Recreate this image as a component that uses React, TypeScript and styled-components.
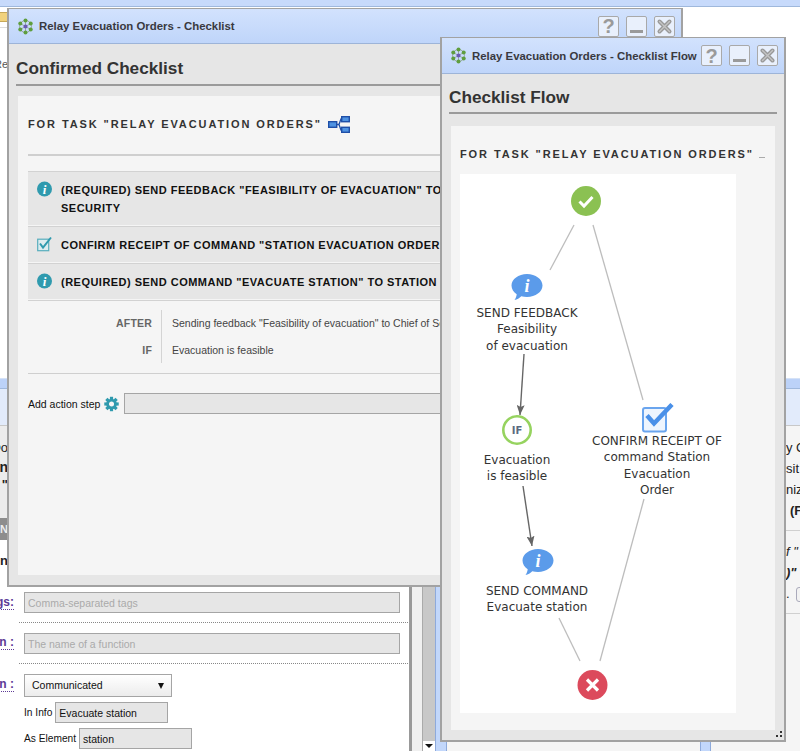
import React from 'react'
import styled, { createGlobalStyle } from 'styled-components'

const GlobalStyle = createGlobalStyle`
  html, body {
    margin: 0;
    padding: 0;
    background: #fff;
    overflow: hidden;
  }
  * {
    box-sizing: border-box;
  }
`

const Desktop = styled.div`
  position: relative;
  width: 800px;
  height: 751px;
  overflow: hidden;
  background: #fff;
  font-family: 'Liberation Sans', Arial, sans-serif;
`

const TopStrip = styled.div`
  height: 7px;
  background: #c7dafb;
  border-bottom: 1px solid #9fb8dc;
`

/* ---------- windows in the back ---------- */

const BackPane = styled.div<{ $left: number; $top: number; $width: number; $height: number }>`
  position: absolute;
  left: ${(p) => p.$left}px;
  top: ${(p) => p.$top}px;
  width: ${(p) => p.$width}px;
  height: ${(p) => p.$height}px;
  overflow: hidden;
`

const BackTitle = styled.div`
  height: 11px;
  background: #bcd2f8;
  border-top: 1px solid #d5e2f7;
  border-bottom: 1px solid #9fb8dc;
`

const BackSubtitle = styled.div`
  height: 37px;
  background: #e2ebfb;
  border-bottom: 1px solid #c8c8c8;
`

const ClipText = styled.div<{ $bold?: boolean; $italic?: boolean; $h?: number; $indent?: number; $size?: number }>`
  height: ${(p) => p.$h ?? 21}px;
  padding-left: ${(p) => p.$indent ?? 0}px;
  line-height: ${(p) => p.$h ?? 21}px;
  font-size: ${(p) => p.$size ?? 13}px;
  font-weight: ${(p) => (p.$bold ? 700 : 400)};
  font-style: ${(p) => (p.$italic ? 'italic' : 'normal')};
  color: #222;
  white-space: nowrap;
`

const EndText = styled(ClipText)`
  display: flex;
  justify-content: flex-end;
`

const TopLeftHeader = styled.div`
  height: 21px;
  padding-top: 5px;
  border-bottom: 1px solid #ddd;
`

const TopLeftIcon = styled.div`
  width: 8px;
  height: 10px;
  background: #f1d27c;
  border: 1px solid #c7a858;
  border-left: none;
`

const TopLeftText = styled(EndText)`
  margin-top: 26px;
  color: #555;
`

const LeftBody = styled.div`
  height: 114px;
  padding-top: 11px;
  background: #ececec;
`

const GrayTab = styled.div`
  height: 22px;
  line-height: 22px;
  margin-top: 25px;
  background: #8d8d8d;
  color: #eee;
  font-size: 11px;
  font-weight: 700;
  text-align: right;
`

const FormPane = styled.div`
  display: flex;
  height: 100%;
  background: #fff;
`

const FormBody = styled.div`
  width: 409px;
  padding-top: 4px;
  background: #fff;
`

const FormRow = styled.div<{ $h: number; $pad: number }>`
  position: relative;
  width: 389px;
  height: ${(p) => p.$h}px;
  margin-left: 19px;
  padding-top: ${(p) => p.$pad}px;
  border-bottom: 1px dotted #888;
`

const SelectRow = styled.div`
  position: relative;
  margin-left: 19px;
  padding-top: 10px;
`

const FieldLabel = styled.span<{ $top: number }>`
  position: absolute;
  right: 100%;
  top: ${(p) => p.$top}px;
  margin-right: 5px;
  font-size: 12px;
  font-weight: 700;
  color: #5d3a96;
  border-bottom: 1px dotted #5d3a96;
  white-space: nowrap;
`

const FieldInput = styled.input<{ $width?: number }>`
  display: block;
  width: ${(p) => p.$width ?? 376}px;
  height: 21px;
  margin: 0 0 0 5px;
  padding: 0 3px;
  background: #e6e6e6;
  border: 1px solid #a5a5a5;
  font-family: inherit;
  font-size: 10.5px;
  color: #111;
  &::placeholder {
    color: #aaa;
    opacity: 1;
  }
`

const FakeSelect = styled.div`
  position: relative;
  width: 148px;
  height: 23px;
  margin-left: 5px;
  padding-left: 7px;
  line-height: 21px;
  font-size: 10.5px;
  color: #111;
  border: 1px solid #a5a5a5;
  background: linear-gradient(#fff, #ececec);
`

const SelectArrow = styled.span`
  position: absolute;
  right: 7px;
  top: 8px;
  width: 0;
  height: 0;
  border-left: 3px solid transparent;
  border-right: 3px solid transparent;
  border-top: 6px solid #111;
`

const InlineField = styled.div`
  display: flex;
  align-items: center;
  gap: 3px;
  height: 21px;
  margin: 5px 0 0 24px;
  font-size: 10.2px;
  color: #111;
  & > input {
    margin-left: 0;
  }
`

const ScrollGap = styled.div`
  width: 3px;
  background: #999;
`

const ScrollGutter = styled.div`
  width: 10px;
  background: #f0f0f0;
`

const ScrollTrack = styled.div`
  position: relative;
  width: 13px;
  background: #c8c8c8;
  border-left: 1px solid #aaa;
`

const ScrollButton = styled.div`
  position: absolute;
  left: 0;
  right: 0;
  bottom: 0;
  height: 10px;
  background: #fff;
  &::after {
    content: '';
    position: absolute;
    left: 2px;
    top: 3px;
    border-left: 4px solid transparent;
    border-right: 4px solid transparent;
    border-top: 4px solid #111;
  }
`

const BlueEdge = styled.div`
  flex: 1;
  background: #c2d7fb;
  border-left: 1px solid #8eaadb;
`

const BottomStrip = styled.div`
  display: flex;
  height: 100%;
`

const StripBlue = styled.div<{ $width: number }>`
  width: ${(p) => p.$width}px;
  background: #c2d7fb;
  border-left: 1px solid #8eaadb;
  border-right: 1px solid #8eaadb;
`

const StripGrey = styled.div<{ $width?: number }>`
  width: ${(p) => (p.$width ? `${p.$width}px` : 'auto')};
  flex: ${(p) => (p.$width ? 'none' : 1)};
  background: #f5f5f5;
`

const RightBody = styled.div`
  height: 100%;
  padding-top: 11px;
  background: #f5f5f5;
`

const RightLine = styled.div`
  height: 1px;
  margin: 9px 0 10px;
  background: #d0d0d0;
`

const TinyButton = styled.span`
  display: inline-block;
  width: 12px;
  height: 15px;
  margin-left: 6px;
  border: 1px solid #aab;
  border-radius: 3px;
  background: #f2f2f2;
  vertical-align: middle;
`

/* ---------- floating windows ---------- */

const Win = styled.div<{ $left: number; $top: number; $width: number; $height: number }>`
  position: absolute;
  left: ${(p) => p.$left}px;
  top: ${(p) => p.$top}px;
  width: ${(p) => p.$width}px;
  height: ${(p) => p.$height}px;
  display: flex;
  flex-direction: column;
  background: #e6e6e6;
  border: 2px solid #a2a2a2;
  border-top-width: 1px;
  overflow: hidden;
`

const TitleBar = styled.div<{ $h: number }>`
  flex: none;
  display: flex;
  align-items: center;
  height: ${(p) => p.$h}px;
  padding-left: 8px;
  background: linear-gradient(#d2e2fd, #bfd5fa);
  border-bottom: 1px solid #9db4d8;
`

const TitleText = styled.span`
  margin-left: 5px;
  font-size: 11.4px;
  font-weight: 700;
  color: #39393f;
  white-space: nowrap;
`

const TitleButtons = styled.div`
  display: flex;
  gap: 7px;
  margin-left: auto;
  padding-right: 6px;
`

const TitleButton = styled.div`
  display: flex;
  align-items: center;
  justify-content: center;
  width: 21px;
  height: 21px;
  background: #e9f0fc;
  border: 1px solid #a9a9a9;
  border-radius: 2px;
  color: #9a9a9a;
  font-size: 20px;
  font-weight: 700;
  line-height: 1;
`

const Heading = styled.h2<{ $h: number; $pad: number }>`
  flex: none;
  height: ${(p) => p.$h}px;
  margin: 0 7px;
  padding-top: ${(p) => p.$pad}px;
  font-size: 17.2px;
  line-height: 28px;
  font-weight: 700;
  color: #333;
  border-bottom: 2px solid #9a9a9a;
`

const Panel = styled.div<{ $top: number; $pad: number }>`
  flex: 1;
  margin: ${(p) => p.$top}px 9px 10px;
  padding: 0 ${(p) => p.$pad}px;
  background: #f5f5f5;
  overflow: hidden;
`

const TaskHeading = styled.div`
  display: flex;
  align-items: center;
  gap: 6px;
  font-size: 11px;
  font-weight: 700;
  letter-spacing: 1.9px;
  color: #333;
  white-space: nowrap;
`

const TaskHeadingMain = styled(TaskHeading)`
  height: 60px;
  padding-bottom: 2px;
  border-bottom: 2px solid #cfcfcf;
`

const TaskHeadingFlow = styled(TaskHeading)`
  height: 48px;
  padding-top: 8px;
  gap: 5px;
`

const Steps = styled.div`
  margin-top: 15px;
  border-bottom: 1px solid #d2d2d2;
`

const Step = styled.div<{ $h: number }>`
  display: flex;
  align-items: flex-start;
  min-height: ${(p) => p.$h}px;
  padding: 9px 10px 0 9px;
  gap: 9px;
  background: #e6e6e6;
  border-top: 1px solid #d2d2d2;
  border-bottom: 1px solid #f5f5f5;
`

const StepText = styled.span<{ $nowrap?: boolean }>`
  max-width: 470px;
  font-size: 11px;
  line-height: 18px;
  font-weight: 700;
  letter-spacing: 0.48px;
  color: #111;
  white-space: ${(p) => (p.$nowrap ? 'nowrap' : 'normal')};
`

const DetailGrid = styled.div`
  display: grid;
  grid-template-columns: 134px 1fr;
  grid-auto-rows: 26.5px;
  margin-top: 9px;
`

const DetailKey = styled.div`
  padding-right: 9px;
  border-right: 1px solid #d4d4d4;
  line-height: 26.5px;
  text-align: right;
  font-size: 10.5px;
  font-weight: 700;
  letter-spacing: 0.2px;
  color: #666;
`

const DetailValue = styled.div`
  padding-left: 10px;
  line-height: 26.5px;
  font-size: 10.5px;
  color: #444;
  white-space: nowrap;
`

const Divider = styled.div`
  height: 1px;
  margin-top: 10px;
  background: #cfcfcf;
`

const AddStep = styled.div`
  display: flex;
  align-items: center;
  gap: 4px;
  height: 21px;
  margin-top: 19px;
  font-size: 10.5px;
  color: #111;
`

const AddInput = styled.div`
  flex: 1;
  height: 21px;
  margin-left: 1px;
  background: #e6e6e6;
  border: 1px solid #a5a5a5;
`

const Grip = styled.div`
  position: absolute;
  right: 2px;
  bottom: 3px;
  width: 2px;
  height: 2px;
  background: #333;
  box-shadow: 0 -4px #333, -4px 0 #333;
`

/* ---------- flow diagram ---------- */

const FlowCanvas = styled.div`
  position: relative;
  width: 276px;
  height: 539px;
  background: #fff;
  overflow: hidden;
`

const FlowEdges = styled.svg`
  position: absolute;
  left: 0;
  top: 0;
`

const FlowIcon = styled.svg<{ $x: number; $y: number }>`
  position: absolute;
  left: ${(p) => p.$x}px;
  top: ${(p) => p.$y}px;
`

const FlowLabel = styled.div<{ $cx: number; $y: number }>`
  position: absolute;
  left: ${(p) => p.$cx - 80}px;
  top: ${(p) => p.$y}px;
  width: 160px;
  text-align: center;
  font-family: 'DejaVu Sans', sans-serif;
  font-size: 12px;
  line-height: 16.3px;
  color: #333;
  white-space: pre-line;
`

const Logo = () => (
  <svg width="17" height="17" viewBox="0 0 17 17">
    <g stroke="#8a9a8a" strokeWidth="0.8" fill="none">
      <circle cx="8.5" cy="8.5" r="6" />
      <path d="M8.5 2.5v12M3.3 5.5l10.4 6M3.3 11.5l10.400-6" />
    </g>
    {[
      [8.5, 2.5],
      [13.7, 5.5],
      [13.7, 11.5],
      [8.5, 14.5],
      [3.3, 11.5],
      [3.3, 5.5]
    ].map(([x, y]) => (
      <circle key={`${x}-${y}`} cx={x} cy={y} r="2" fill="#5f9e3e" />
    ))}
    <circle cx="8.5" cy="8.5" r="2" fill="#6a5bb5" />
  </svg>
)

const HelpIcon = () => <TitleButton>?</TitleButton>

const MinIcon = () => (
  <TitleButton>
    <svg width="19" height="19" viewBox="0 0 19 19">
      <rect x="3" y="13" width="13" height="3" fill="#9a9a9a" />
    </svg>
  </TitleButton>
)

const CloseIcon = () => (
  <TitleButton>
    <svg width="19" height="19" viewBox="0 0 19 19">
      <path d="M4.5 4.5l10 10M14.5 4.5l-10 10" stroke="#999" strokeWidth="4" strokeLinecap="round" />
      <path d="M4.5 4.5l10 10M14.5 4.5l-10 10" stroke="#c4c4c4" strokeWidth="1.4" strokeLinecap="round" />
    </svg>
  </TitleButton>
)

const InfoBadge = () => (
  <svg width="15" height="16" viewBox="0 0 15 16" style={{ flex: 'none' }}>
    <circle cx="7.5" cy="8" r="7.5" fill="#2f9aae" />
    <text x="7.5" y="12.5" textAnchor="middle" fontFamily="Liberation Serif, serif" fontStyle="italic" fontWeight="700" fontSize="13" fill="#fff">
      i
    </text>
  </svg>
)

const CheckBadge = () => (
  <svg width="15" height="16" viewBox="0 0 15 16" style={{ flex: 'none' }}>
    <rect x="0.7" y="3.2" width="11" height="11.5" fill="#dcecef" stroke="#58aebd" strokeWidth="1.2" />
    <path d="M3 7.5l3 4 8-10" fill="none" stroke="#2f9aae" strokeWidth="2" />
  </svg>
)

const GearBadge = () => (
  <svg width="15" height="16" viewBox="0 0 16 16" style={{ flex: 'none' }}>
    <g fill="#2f9aae">
      {[0, 45, 90, 135, 180, 225, 270, 315].map((a) => (
        <rect key={a} x="6.3" y="0.3" width="3.4" height="4" transform={`rotate(${a} 8 8)`} />
      ))}
    </g>
    <circle cx="8" cy="8" r="4.2" fill="none" stroke="#2f9aae" strokeWidth="3" />
  </svg>
)

const TreeIcon = () => (
  <svg width="22" height="17" viewBox="0 0 22 17">
    <path d="M9 8.500h2M11 8.500l2-5.500h1M11 8.500l2 5.500h1" fill="none" stroke="#1f4fa8" strokeWidth="1.3" />
    <g fill="#4f93e2" stroke="#1f4fa8" strokeWidth="1.4">
      <rect x="0.7" y="5.700" width="8" height="5.600" />
      <rect x="13.7" y="0.700" width="7.600" height="5" />
      <rect x="13.7" y="11.300" width="7.600" height="5" />
    </g>
  </svg>
)

const Bubble = ({ x, y }: { x: number; y: number }) => (
  <FlowIcon $x={x} $y={y} width="32" height="28" viewBox="0 0 32 28">
    <path
      d="M16 1c8.500 0 15.500 5.200 15.500 11.500S24.500 24 16 24c-2 0-4-.3-5.700-.8C8.500 25 6 26.500 3.500 27c1.200-1.500 2-3.500 2.200-5.700C2.600 19.200.5 16 .5 12.500.5 6.200 7.500 1 16 1z"
      fill="#5b9bea"
    />
    <text x="16" y="19" textAnchor="middle" fontFamily="Liberation Serif, serif" fontStyle="italic" fontWeight="700" fontSize="18" fill="#fff">
      i
    </text>
  </FlowIcon>
)

const flowEdges = [
  { d: 'M114 51L90 96', dark: false },
  { d: 'M133 51L183 226', dark: false },
  { d: 'M184 325L140 487', dark: false },
  { d: 'M99 444L120 487', dark: false },
  { d: 'M64 180L60 241', dark: true },
  { d: 'M63 312L72 372', dark: true }
]

const FlowDiagram = () => (
  <FlowCanvas>
    <FlowEdges width="276" height="539" viewBox="0 0 276 539">
      <defs>
        <marker id="arrow" viewBox="0 0 10 8" refX="10" refY="4" markerUnits="userSpaceOnUse" markerWidth="10" markerHeight="8" orient="auto">
          <path d="M0 0L10 4 0 8 2 4z" fill="#666" />
        </marker>
      </defs>
      {flowEdges.map((e) => (
        <path
          key={e.d}
          d={e.d}
          fill="none"
          stroke={e.dark ? '#666' : '#bdbdbd'}
          strokeWidth={e.dark ? 1.4 : 1.3}
          markerEnd={e.dark ? 'url(#arrow)' : undefined}
        />
      ))}
    </FlowEdges>

    <FlowIcon $x={111} $y={12} width="30" height="30" viewBox="0 0 30 30">
      <circle cx="15" cy="15" r="15" fill="#8bc152" />
      <path d="M8.500 15.500l4.500 4.500 8.500-9" fill="none" stroke="#fff" strokeWidth="3" />
    </FlowIcon>

    <Bubble x={51} y={99} />
    <FlowLabel $cx={67} $y={131}>{'SEND FEEDBACK\nFeasibility\nof evacuation'}</FlowLabel>

    <FlowIcon $x={42} $y={241} width="30" height="30" viewBox="0 0 30 30">
      <circle cx="15" cy="15" r="13.700" fill="#fff" stroke="#96d35f" strokeWidth="2.600" />
      <text x="15" y="19" textAnchor="middle" fontFamily="DejaVu Sans, sans-serif" fontWeight="700" fontSize="10" fill="#5a6a80">
        IF
      </text>
    </FlowIcon>
    <FlowLabel $cx={57} $y={278}>{'Evacuation\nis feasible'}</FlowLabel>

    <Bubble x={62} y={374} />
    <FlowLabel $cx={77} $y={409}>{'SEND COMMAND\nEvacuate station'}</FlowLabel>

    <FlowIcon $x={182} $y={229} width="32" height="30" viewBox="0 0 32 30">
      <rect x="1" y="5" width="23" height="23.500" rx="2" fill="#eef5fe" stroke="#6aa5ee" strokeWidth="2" />
      <path d="M5 12.500l7 8L30 1.500" fill="none" stroke="#4a90e8" strokeWidth="4.500" />
    </FlowIcon>
    <FlowLabel $cx={197} $y={259}>{'CONFIRM RECEIPT OF\ncommand Station\nEvacuation\nOrder'}</FlowLabel>

    <FlowIcon $x={117} $y={496} width="31" height="30" viewBox="0 0 31 30">
      <circle cx="15.500" cy="15" r="15" fill="#dc4a5c" />
      <path d="M10 9.500l11 11M21 9.500l-11 11" stroke="#fff" strokeWidth="3.200" />
    </FlowIcon>
  </FlowCanvas>
)

const App: React.FC = () => (
  <Desktop>
    <GlobalStyle />
    <TopStrip />

    {/* what shows to the left of the checklist window */}
    <BackPane $left={0} $top={7} $width={8} $height={371}>
      <TopLeftHeader>
        <TopLeftIcon />
      </TopLeftHeader>
      <TopLeftText $h={20} $size={11}>
        Re
      </TopLeftText>
    </BackPane>
    <BackPane $left={0} $top={378} $width={8} $height={212}>
      <BackTitle />
      <BackSubtitle />
      <LeftBody>
        <EndText $h={21}>Do</EndText>
        <EndText $bold $h={19} $size={14}>n</EndText>
        <EndText $bold $h={16}>"</EndText>
        <GrayTab>N</GrayTab>
      </LeftBody>
      <EndText $h={21} $bold style={{ marginTop: 10 }}>n</EndText>
    </BackPane>

    {/* form below the checklist window */}
    <BackPane $left={0} $top={587} $width={440} $height={164}>
      <FormPane>
        <FormBody>
          <FormRow $h={32} $pad={1}>
            <FieldLabel $top={4}>Tags:</FieldLabel>
            <FieldInput placeholder="Comma-separated tags" readOnly />
          </FormRow>
          <FormRow $h={41} $pad={10}>
            <FieldLabel $top={12}>Function :</FieldLabel>
            <FieldInput placeholder="The name of a function" readOnly />
          </FormRow>
          <SelectRow>
            <FieldLabel $top={13}>Condition :</FieldLabel>
            <FakeSelect>
              Communicated
              <SelectArrow />
            </FakeSelect>
          </SelectRow>
          <InlineField>
            In Info
            <FieldInput $width={113} defaultValue="Evacuate station" readOnly />
          </InlineField>
          <InlineField>
            As Element
            <FieldInput $width={113} defaultValue="station" readOnly />
          </InlineField>
        </FormBody>
        <ScrollGap />
        <ScrollGutter />
        <ScrollTrack>
          <ScrollButton />
        </ScrollTrack>
        <BlueEdge />
      </FormPane>
    </BackPane>

    {/* strip below the flow window */}
    <BackPane $left={435} $top={742} $width={365} $height={9}>
      <BottomStrip>
        <StripBlue $width={12} />
        <StripGrey $width={253} />
        <StripBlue $width={11} />
        <StripGrey />
      </BottomStrip>
    </BackPane>

    {/* window on the right, behind the flow window */}
    <BackPane $left={786} $top={378} $width={14} $height={373}>
      <BackTitle />
      <BackSubtitle />
      <RightBody>
        <ClipText>y C</ClipText>
        <ClipText>sit</ClipText>
        <ClipText>niz</ClipText>
        <ClipText $bold $indent={4}>(F</ClipText>
        <RightLine />
        <ClipText $italic>f "</ClipText>
        <ClipText $bold $italic>)"</ClipText>
        <ClipText>
          .<TinyButton />
        </ClipText>
        <RightLine />
      </RightBody>
    </BackPane>

    <Win $left={7} $top={8} $width={676} $height={579}>
      <TitleBar $h={35}>
        <Logo />
        <TitleText>Relay Evacuation Orders - Checklist</TitleText>
        <TitleButtons>
          <HelpIcon />
          <MinIcon />
          <CloseIcon />
        </TitleButtons>
      </TitleBar>
      <Heading $h={42} $pad={10}>Confirmed Checklist</Heading>
      <Panel $top={10} $pad={10}>
        <TaskHeadingMain>
          FOR TASK "RELAY EVACUATION ORDERS"
          <TreeIcon />
        </TaskHeadingMain>
        <Steps>
          <Step $h={55}>
            <InfoBadge />
            <StepText>(REQUIRED) SEND FEEDBACK "FEASIBILITY OF EVACUATION" TO CHIEF OF SECURITY</StepText>
          </Step>
          <Step $h={37}>
            <CheckBadge />
            <StepText $nowrap>CONFIRM RECEIPT OF COMMAND "STATION EVACUATION ORDER"</StepText>
          </Step>
          <Step $h={37}>
            <InfoBadge />
            <StepText $nowrap>(REQUIRED) SEND COMMAND "EVACUATE STATION" TO STATION STAFF</StepText>
          </Step>
        </Steps>
        <DetailGrid>
          <DetailKey>AFTER</DetailKey>
          <DetailValue>Sending feedback "Feasibility of evacuation" to Chief of Security</DetailValue>
          <DetailKey>IF</DetailKey>
          <DetailValue>Evacuation is feasible</DetailValue>
        </DetailGrid>
        <Divider />
        <AddStep>
          Add action step
          <GearBadge />
          <AddInput />
        </AddStep>
      </Panel>
    </Win>

    <Win $left={440} $top={37} $width={346} $height={705}>
      <TitleBar $h={36}>
        <Logo />
        <TitleText>Relay Evacuation Orders - Checklist Flow</TitleText>
        <TitleButtons>
          <HelpIcon />
          <MinIcon />
          <CloseIcon />
        </TitleButtons>
      </TitleBar>
      <Heading $h={40} $pad={9}>Checklist Flow</Heading>
      <Panel $top={12} $pad={9}>
        <TaskHeadingFlow>
          FOR TASK "RELAY EVACUATION ORDERS"
          <svg width="6" height="10" viewBox="0 0 6 10">
            <rect y="8" width="6" height="1" fill="#aaa" />
          </svg>
        </TaskHeadingFlow>
        <FlowDiagram />
      </Panel>
      <Grip />
    </Win>
  </Desktop>
)

export default App
